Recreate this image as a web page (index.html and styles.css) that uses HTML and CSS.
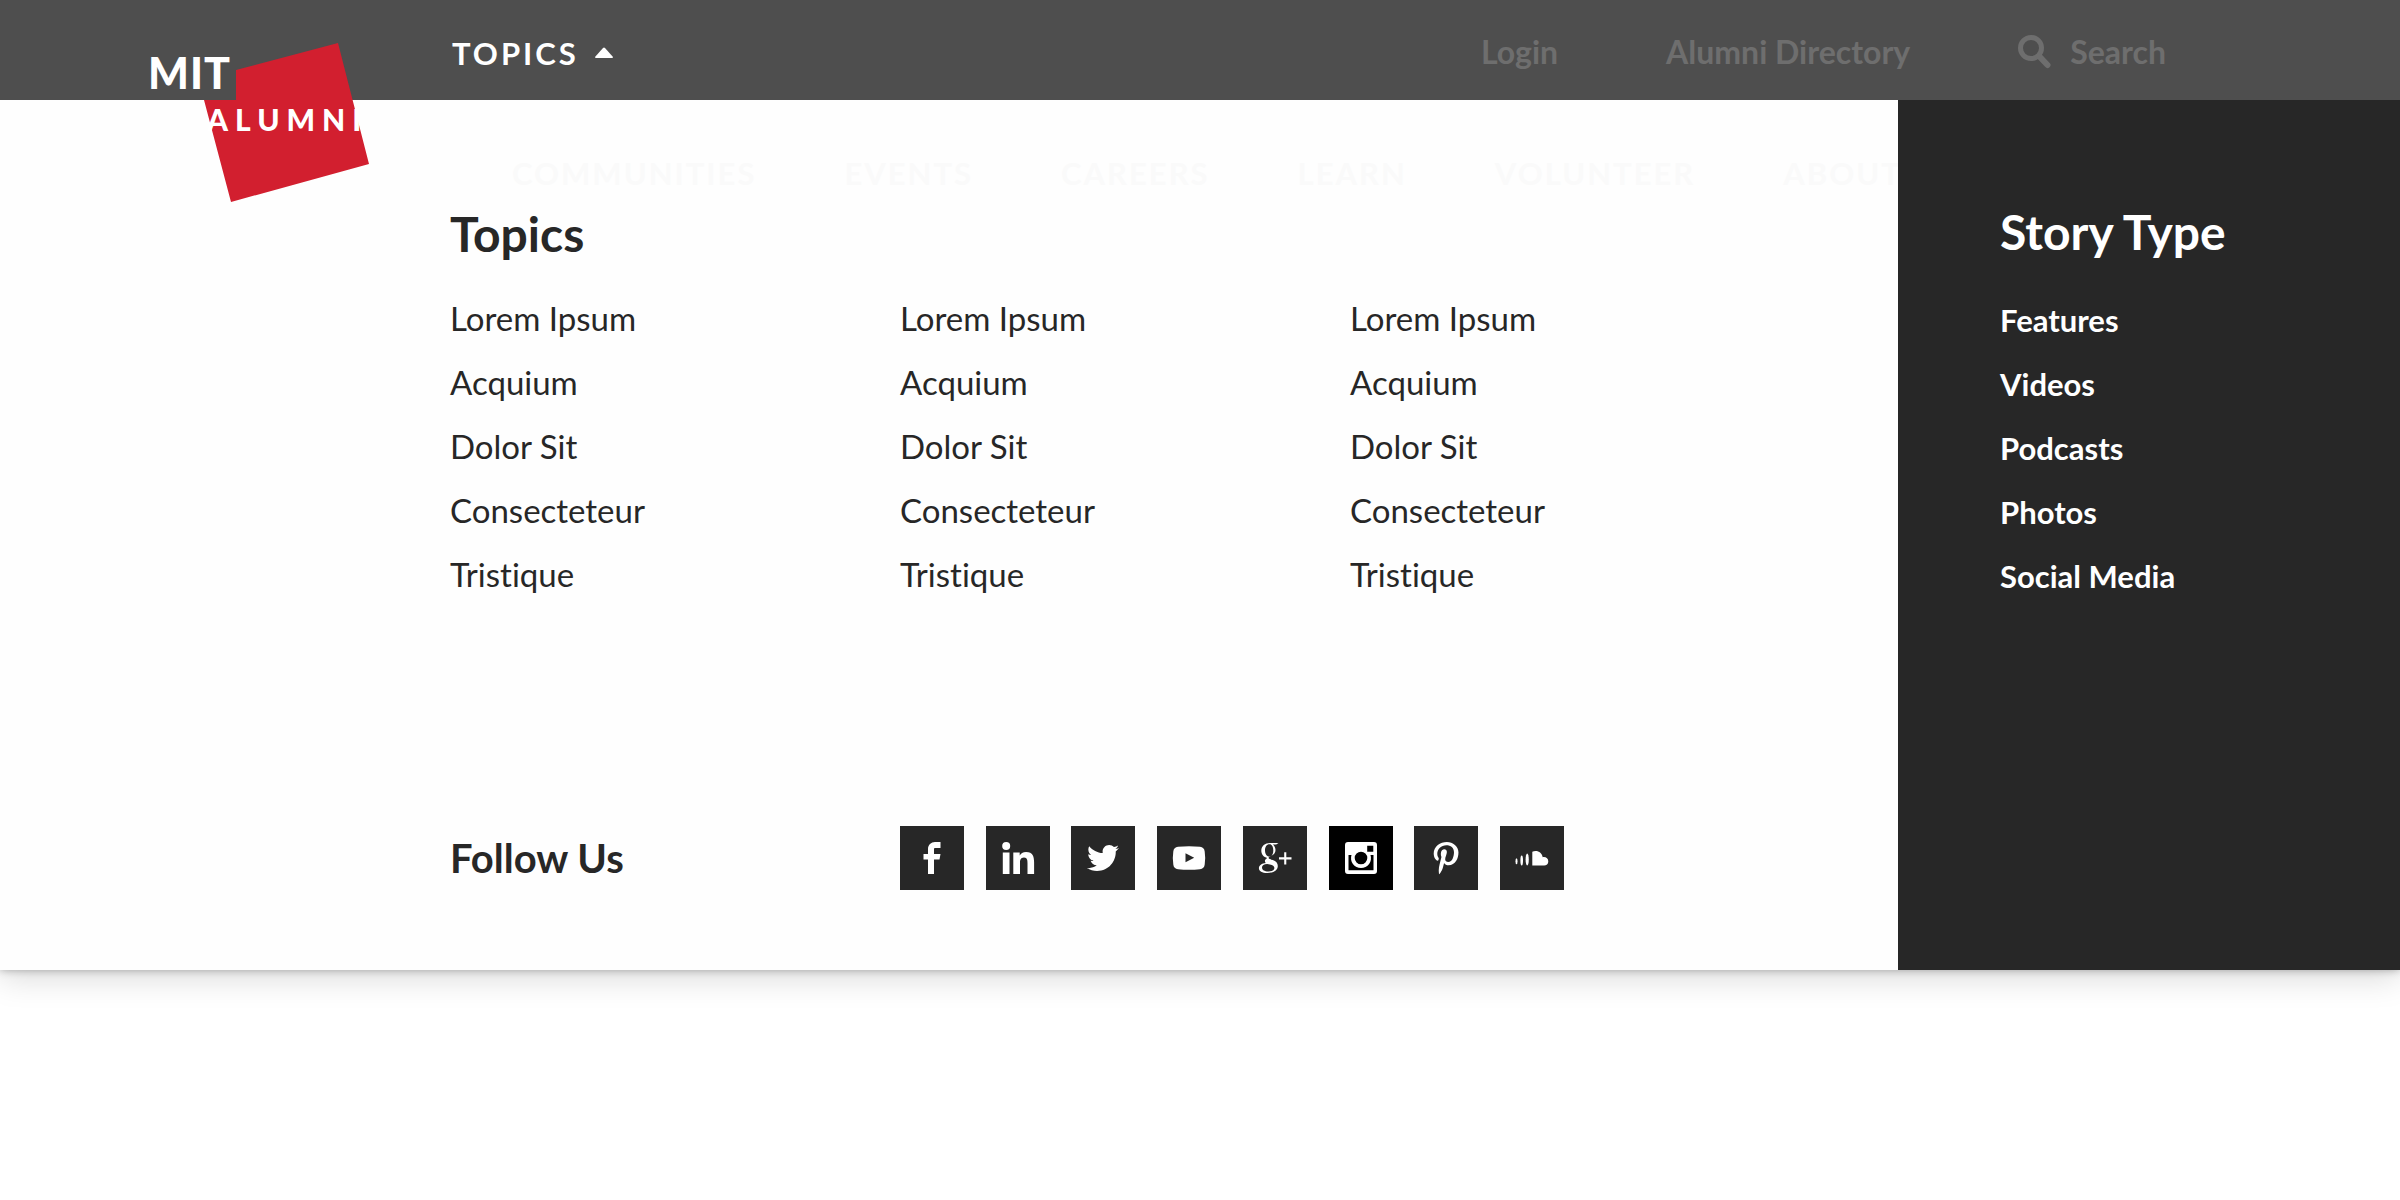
FILE: index.html
```html
<!DOCTYPE html>
<html lang="en">
<head>
<meta charset="utf-8">
<meta name="viewport" content="width=device-width, initial-scale=1">
<title>MIT Alumni</title>
<link rel="stylesheet" href="styles.css">
</head>
<body>
<header class="topbar">
  <a class="logo" href="#" aria-label="MIT Alumni">
    <svg width="250" height="180" viewBox="0 0 250 180">
      <path fill="#d21f2f" d="M198 13 229 134 91 172 64 70H96V40z"/>
      <text class="logo-mit" x="8" y="59">MIT</text>
      <text class="logo-alumni" x="67" y="101">ALUMNI</text>
    </svg>
  </a>
  <button class="topics-toggle" type="button" aria-expanded="true">TOPICS
    <svg width="18" height="12" viewBox="0 0 18 12"><path fill="#fff" d="M8 1q1-1 2 0l8 9q0 1-1 1H1q-1 0-1-1z"/></svg>
  </button>
  <nav class="utility" aria-label="Utility">
    <a class="login" href="#">Login</a>
    <a class="directory" href="#">Alumni Directory</a>
    <a class="search" href="#">
      <svg width="34" height="34" viewBox="0 0 34 34" fill="none" stroke="currentColor"><circle cx="13" cy="13" r="10.5" stroke-width="5"/><path d="M21 21l8.500 9" stroke-width="6" stroke-linecap="round"/></svg>
      Search
    </a>
  </nav>
</header>

<main class="mega">
  <div class="mega-main">
    <nav class="sections" aria-label="Sections">
      <a href="#">COMMUNITIES</a>
      <a href="#">EVENTS</a>
      <a href="#">CAREERS</a>
      <a href="#">LEARN</a>
      <a href="#">VOLUNTEER</a>
      <a href="#">ABOUT</a>
    </nav>
    <h2>Topics</h2>
    <div class="columns">
      <ul>
        <li><a href="#">Lorem Ipsum</a></li>
        <li><a href="#">Acquium</a></li>
        <li><a href="#">Dolor Sit</a></li>
        <li><a href="#">Consecteteur</a></li>
        <li><a href="#">Tristique</a></li>
      </ul>
      <ul>
        <li><a href="#">Lorem Ipsum</a></li>
        <li><a href="#">Acquium</a></li>
        <li><a href="#">Dolor Sit</a></li>
        <li><a href="#">Consecteteur</a></li>
        <li><a href="#">Tristique</a></li>
      </ul>
      <ul>
        <li><a href="#">Lorem Ipsum</a></li>
        <li><a href="#">Acquium</a></li>
        <li><a href="#">Dolor Sit</a></li>
        <li><a href="#">Consecteteur</a></li>
        <li><a href="#">Tristique</a></li>
      </ul>
    </div>
    <div class="follow">
      <h3>Follow Us</h3>
      <div class="social">
        <a href="#" aria-label="Facebook"><svg viewBox="0 0 64 64"><path transform="translate(16 16)" d="M19 6h5.500V0h-5.500c-3.900 0-7 3.100-7 7v5H7.500v5.500H12V32h6V17.500h5.500l1-5.500H18V7c0-.5.5-1 1-1z"/></svg></a>
        <a href="#" aria-label="LinkedIn"><svg viewBox="0 0 64 64"><circle cx="20.200" cy="20" r="4"/><path d="M16.800 26.500h6.700V48h-6.700zM27.300 26.500h6.400v3c1-1.800 3.200-3.500 6.400-3.500 6.800 0 8 4.400 8 10.300V48h-6.600V37.400c0-2.500 0-5.800-3.500-5.800s-4 2.800-4 5.600V48h-6.700z"/></svg></a>
        <a href="#" aria-label="Twitter"><svg viewBox="0 0 64 64"><path transform="translate(16 15)" d="M32 7.075c-1.175.525-2.444.875-3.769 1.031 1.356-.813 2.394-2.100 2.887-3.631-1.269.75-2.675 1.300-4.169 1.594-1.200-1.275-2.906-2.069-4.794-2.069-3.625 0-6.563 2.938-6.563 6.563 0 .512.056 1.012.169 1.494-5.456-.275-10.294-2.888-13.531-6.862-.563.969-.887 2.100-.887 3.300 0 2.275 1.156 4.287 2.919 5.463-1.075-.031-2.087-.331-2.975-.819v.081c0 3.181 2.263 5.838 5.269 6.437-.55.15-1.131.231-1.731.231-.425 0-.831-.044-1.237-.119.838 2.606 3.263 4.506 6.131 4.563-2.250 1.762-5.075 2.813-8.156 2.813-.531 0-1.050-.031-1.569-.094 2.913 1.869 6.362 2.950 10.069 2.950 12.075 0 18.681-10.006 18.681-18.681 0-.287-.006-.569-.019-.85 1.281-.919 2.394-2.075 3.275-3.394z"/></svg></a>
        <a href="#" aria-label="YouTube"><svg viewBox="0 0 64 64"><path fill-rule="evenodd" d="M21 20.800Q32 19.600 43 20.800 47.200 21.200 47.700 25.500 48.700 32 47.700 38.500 47.200 42.800 43 43.200 32 44.400 21 43.200 16.800 42.800 16.300 38.500 15.300 32 16.300 25.500 16.800 21.200 21 20.800zM28.500 27.300V36.200L37.200 31.800z"/></svg></a>
        <a href="#" aria-label="Google Plus"><svg viewBox="0 0 64 64"><path fill-rule="evenodd" d="M35.500 17H27c-5 0-8.700 3.100-8.700 7.700 0 3.700 2.600 6.600 6 7.200-1.600.9-2.400 2-2.400 3 0 .8.3 1.500 1 2.100-4.200.4-7 2.500-7 5.200 0 3 3.300 4.800 8.300 4.800 6.500 0 10.600-3 10.600-7 0-3-1.800-4.700-5-5.900-2-.8-4.200-1-4.200-2 0-.9 1.500-1.500 3.300-2.500 2.300-1.300 3.600-3.100 3.600-5.500 0-2.300-1-4.300-2.700-5.600h3.400zM26.500 18.300c2.600 0 3.800 3 3.800 6.300 0 3.600-1.400 6-4 6s-4.300-2.800-4.300-6.300c0-3.300 1.600-6 4.500-6zM24.200 37.900c4.200.5 7.200 1.600 7.200 4 0 2-2.400 3.500-6 3.500-4 0-6.400-1.600-6.400-4 0-2 2-3.400 5.200-3.500zM41.200 26.300h2.100v5h5.200v2.100h-5.200v5h-2.100v-5H36v-2.100h5.200z"/></svg></a>
        <a class="current" href="#" aria-label="Instagram"><svg viewBox="0 0 64 64"><path fill-rule="evenodd" d="M19 16H45a3 3 0 0 1 3 3V45a3 3 0 0 1-3 3H19a3 3 0 0 1-3-3V19a3 3 0 0 1 3-3zM38.200 19.700V25.800H44.300V19.700zM19.500 29V44.300H44.500V29H41.500A10 10 0 1 1 22.500 29zM32 25.700A6.300 6.300 0 1 0 32 38.300 6.300 6.300 0 1 0 32 25.700z"/></svg></a>
        <a href="#" aria-label="Pinterest"><svg viewBox="0 0 64 64"><path transform="translate(19.700 15.600) scale(.0645)" d="M204 6.500C101.400 6.500 0 74.900 0 185.600 0 256 39.600 296 63.600 296c9.900 0 15.600-27.600 15.600-35.400 0-9.300-23.700-29.100-23.700-67.800 0-80.400 61.200-137.400 140.400-137.400 68.100 0 118.500 38.700 118.500 109.800 0 53.100-21.300 152.700-90.300 152.700-24.900 0-46.200-18-46.200-43.800 0-37.800 26.400-74.400 26.400-113.400 0-66.200-93.900-54.200-93.900 25.800 0 16.800 2.100 35.400 9.600 50.700-13.800 59.400-42 147.900-42 209.100 0 18.900 2.700 37.500 4.500 56.400 3.400 3.800 1.700 3.400 6.900 1.500 50.400-69 48.600-82.500 71.400-172.800 12.300 23.400 44.100 36 69.300 36 106.200 0 153.900-103.500 153.900-196.800C384 71.300 298.200 6.500 204 6.500z"/></svg></a>
        <a href="#" aria-label="SoundCloud"><svg viewBox="0 0 64 64"><ellipse cx="16.500" cy="35.200" rx="1" ry="3"/><ellipse cx="21.700" cy="34.500" rx="1.300" ry="5"/><ellipse cx="27.200" cy="33.500" rx="1.600" ry="6"/><path d="M32.300 25.800c1-.6 2-.8 3.200-.8 3.800 0 6.700 2.600 7.200 6.200 3.200-.6 5.600 1.400 5.600 4.200 0 2.400-1.900 4.100-4.200 4.100H32.300z"/></svg></a>
      </div>
    </div>
  </div>
  <aside class="mega-side">
    <h2>Story Type</h2>
    <ul>
      <li><a href="#">Features</a></li>
      <li><a href="#">Videos</a></li>
      <li><a href="#">Podcasts</a></li>
      <li><a href="#">Photos</a></li>
      <li><a href="#">Social Media</a></li>
    </ul>
  </aside>
</main>
</body>
</html>
```
FILE: styles.css
```css
* { box-sizing: border-box; }

body {
  min-height: 100vh;
  margin: 0;
  background: #fff;
  color: #272727;
  font-family: Lato, "Liberation Sans", sans-serif;
  font-variant-ligatures: none;
}

a { color: inherit; text-decoration: none; }
ul { list-style: none; margin: 0; padding: 0; }
h2, h3 { margin: 0; font-weight: 700; }
h2 { font-size: 48px; line-height: 56px; }

/* Top bar */
.topbar {
  position: relative;
  z-index: 2;
  display: flex;
  align-items: center;
  justify-content: space-between;
  min-height: 100px;
  padding: 0 234px 0 452px;
  background: #4e4e4e;
}

.logo {
  position: absolute;
  top: 30px;
  left: 140px;
}
.logo svg { display: block; }
.logo text { fill: #fff; font-weight: 900; }
.logo-mit { font-size: 43px; letter-spacing: 1px; }
.logo-alumni { font-size: 30px; letter-spacing: 7px; }

.topics-toggle {
  display: flex;
  align-items: center;
  gap: 16px;
  padding: 6px 0 0;
  border: 0;
  background: none;
  color: #fff;
  font: inherit;
  font-size: 31px;
  font-weight: 700;
  line-height: 36px;
  letter-spacing: 3px;
}

.utility {
  display: flex;
  align-items: center;
  gap: 108px;
  padding-top: 4px;
  color: #6e6e6e;
  font-size: 32px;
  font-weight: 700;
  line-height: 36px;
}
.search { display: flex; align-items: center; gap: 18px; }

/* Dropdown panel */
.mega {
  position: relative;
  z-index: 1;
  display: grid;
  grid-template-columns: minmax(0, 1fr) 502px;
  min-height: 870px;
  box-shadow: 0 0 8px rgba(0, 0, 0, .3), 0 8px 30px rgba(0, 0, 0, .15);
}

.mega-main {
  display: flex;
  flex-direction: column;
  padding: 54px 0 80px 450px;
  background: #fefefe;
}

.sections {
  display: flex;
  gap: 88px;
  margin-bottom: 14px;
  padding-left: 62px;
  overflow: hidden;
  color: #fafafa;
  font-size: 31px;
  font-weight: 700;
  line-height: 38px;
  letter-spacing: 2px;
  white-space: nowrap;
}

.columns {
  display: grid;
  grid-template-columns: repeat(3, 450px);
  margin-top: 24px;
  font-size: 33px;
  line-height: 64px;
}

.follow {
  display: grid;
  grid-template-columns: 450px 664px;
  align-items: center;
  margin-top: auto;
}
.follow h3 { font-size: 40px; line-height: 48px; }

.social { display: flex; justify-content: space-between; }
.social a { width: 64px; height: 64px; background: #272727; }
.social a.current { background: #000; }
.social svg { display: block; fill: #fff; }

.mega-side {
  padding: 104px 40px 80px 102px;
  background: #272727;
  color: #fff;
}
.mega-side ul {
  margin-top: 28px;
  font-size: 31px;
  font-weight: 700;
  line-height: 64px;
}
```
